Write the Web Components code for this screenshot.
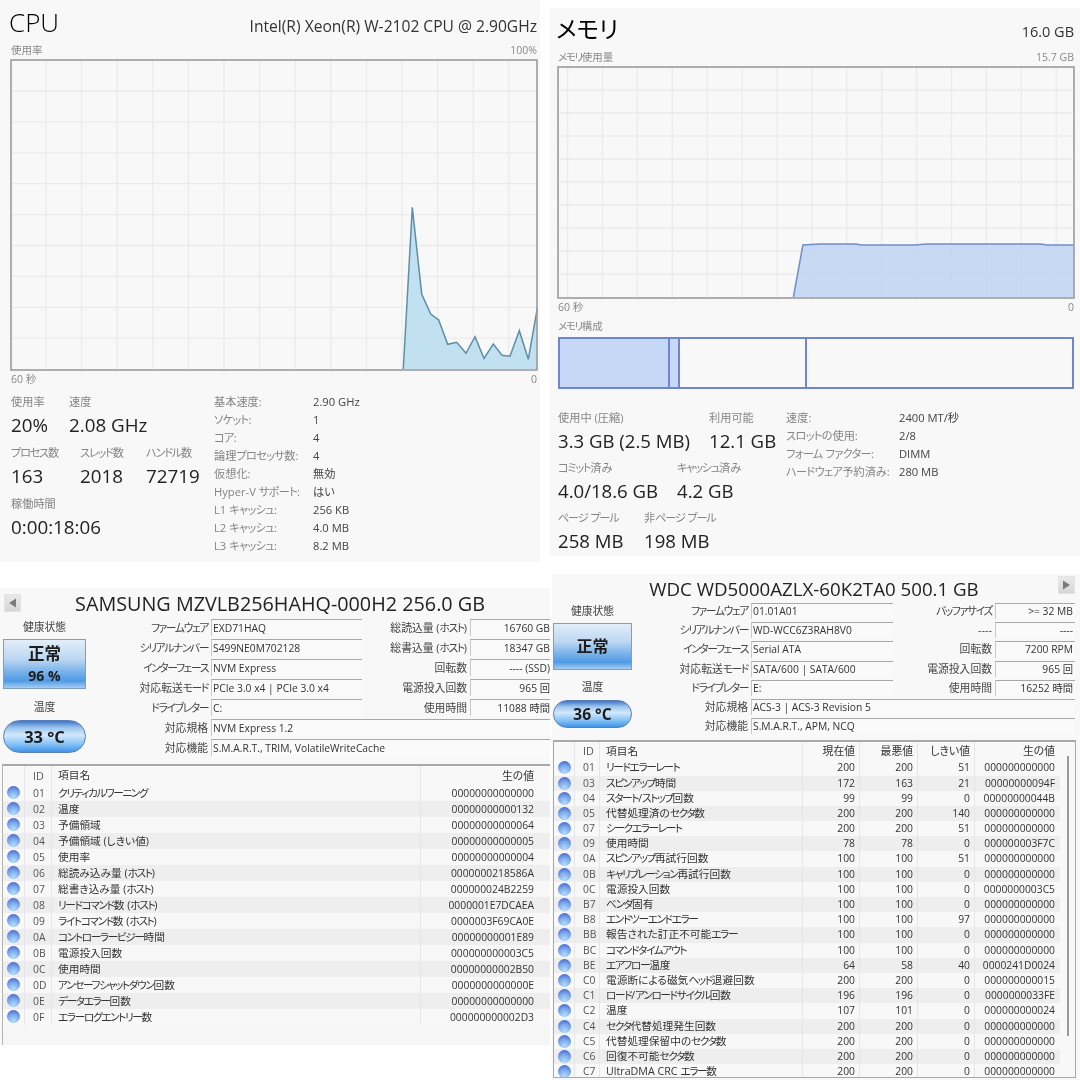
<!DOCTYPE html>
<html lang="ja">
<head>
<meta charset="utf-8">
<title>PC specs</title>
<style>
  html, body { margin: 0; padding: 0; background: #fff; }
  body {
    display: flex;
    width: 1080px;
    height: 1080px;
    overflow: hidden;
    font-family: "Open Sans", "Noto Sans CJK JP", sans-serif;
    font-feature-settings: "palt";
    color: #222;
  }
</style>
</head>
<body>
  <collage-column style="width:550px">
    <perf-panel heading="CPU" detail="Intel(R) Xeon(R) W-2102 CPU @ 2.90GHz" caption="使用率" caption-end="100%" style="width:540px;height:562px;--pad-l:11px;--pad-r:3px;--head-h:44px;--head-size:26px;--title-shift:-2px;--detail-size:15.6px;--detail-pad:8px">
      <usage-graph view="10 59 528 312" col-start="46" col-step="35.6" row-start="91" row-step="30.9" stroke="#5f8ea8" fill="#b9ddef"
        points="403.3,369 412.3,207.3 421.7,294 430.7,314 438.7,320 447.7,344.3 456.7,342.3 466,353.3 475,336.7 484,358.3 493.3,344 502,355.3 510,356.3 519.3,330.7 528.3,359.3 537.3,308.3 537.3,369"></usage-graph>
      <axis-row start="60 秒" end="0"></axis-row>
      <stats-area left="203px" style="margin-top:7px">
        <stat-row columns="58px auto" slot="stats"><stat-item label="使用率" value="20%"></stat-item><stat-item label="速度" value="2.08 GHz"></stat-item></stat-row>
        <stat-row columns="69px 66px auto" slot="stats"><stat-item label="プロセス数" value="163"></stat-item><stat-item label="スレッド数" value="2018"></stat-item><stat-item label="ハンドル数" value="72719"></stat-item></stat-row>
        <stat-row columns="auto" slot="stats"><stat-item label="稼働時間" value="0:00:18:06"></stat-item></stat-row>
        <spec-row label="基本速度:" slot="specs">2.90 GHz</spec-row>
        <spec-row label="ソケット:" slot="specs">1</spec-row>
        <spec-row label="コア:" slot="specs">4</spec-row>
        <spec-row label="論理プロセッサ数:" slot="specs">4</spec-row>
        <spec-row label="仮想化:" slot="specs">無効</spec-row>
        <spec-row label="Hyper-V サポート:" slot="specs">はい</spec-row>
        <spec-row label="L1 キャッシュ:" slot="specs">256 KB</spec-row>
        <spec-row label="L2 キャッシュ:" slot="specs">4.0 MB</spec-row>
        <spec-row label="L3 キャッシュ:" slot="specs">8.2 MB</spec-row>
      </stats-area>
    </perf-panel>

    <disk-panel heading="SAMSUNG MZVLB256HAHQ-000H2 256.0 GB" style="margin-top:26px;width:550px;height:457px;--head-h:30.5px;--title-size:19.8px;--title-pad:3px 0 2px 10px;--fh:17px;--fg:3px;--lw-l:118px;--lw-r:105px;--col-l:272px;--col-r:188px;--status-w:90px;--table-mt:8px;--val-pr:0px">
      <arrow-button slot="prev" dir="left"></arrow-button>
      <disk-status slot="status" status="正常" life="96 %" temp="33 °C" style="--box-w:83px;--box-h:50px;--pill-h:33px;--temp-gap:10px;--pad-l:3px;--status-size:16.5px;--temp-size:16.5px"></disk-status>
      <disk-field label="ファームウェア">EXD71HAQ</disk-field>
      <disk-field label="総読込量 (ホスト)" r>16760 GB</disk-field>
      <disk-field label="シリアルナンバー">S499NE0M702128</disk-field>
      <disk-field label="総書込量 (ホスト)" r>18347 GB</disk-field>
      <disk-field label="インターフェース">NVM Express</disk-field>
      <disk-field label="回転数" r>---- (SSD)</disk-field>
      <disk-field label="対応転送モード">PCIe 3.0 x4 | PCIe 3.0 x4</disk-field>
      <disk-field label="電源投入回数" r>965 回</disk-field>
      <disk-field label="ドライブレター">C:</disk-field>
      <disk-field label="使用時間" r>11088 時間</disk-field>
      <disk-field label="対応規格" wide>NVM Express 1.2</disk-field>
      <disk-field label="対応機能" wide>S.M.A.R.T., TRIM, VolatileWriteCache</disk-field>
      <smart-table slot="table" cols="21px 27px 369px 118px" heads="ID|項目名|生の値" style="margin-left:2px;height:282px;--head-row:19px;--row-h:16px"
        rows="01|クリティカルワーニング|00000000000000
02|温度|00000000000132
03|予備領域|00000000000064
04|予備領域 (しきい値)|00000000000005
05|使用率|00000000000004
06|総読み込み量 (ホスト)|0000000218586A
07|総書き込み量 (ホスト)|000000024B2259
08|リードコマンド数 (ホスト)|0000001E7DCAEA
09|ライトコマンド数 (ホスト)|0000003F69CA0E
0A|コントローラービジー時間|00000000001E89
0B|電源投入回数|000000000003C5
0C|使用時間|00000000002B50
0D|アンセーフシャットダウン回数|0000000000000E
0E|データエラー回数|00000000000000
0F|エラーログエントリー数|000000000002D3"></smart-table>
    </disk-panel>
  </collage-column>

  <collage-column style="width:530px">
    <perf-panel heading="メモリ" detail="16.0 GB" caption="メモリ使用量" caption-end="15.7 GB" style="margin-top:8px;width:530px;height:548px;--pad-l:8px;--pad-r:6px;--head-h:43px;--head-size:23.5px;--head-weight:400;--title-shift:-2px;--detail-size:14.5px;--detail-pad:3px">
      <usage-graph view="557 66 518 233" col-start="567.6" col-step="34.9" row-start="90" row-step="23" stroke="#6f8fca" fill="#bfd3f2"
        points="793.4,297 802.9,244.9 820.4,243.9 856,243.9 861,244.9 915,244.9 927,243.9 1040,243.9 1047,244.9 1073.7,244.9 1073.7,297"></usage-graph>
      <axis-row start="60 秒" end="0" style="margin-top:0"></axis-row>
      <memory-map style="margin-top:3px"></memory-map>
      <stats-area left="228px" style="margin-top:21px;--row-gap:4px;--value-size:18.6px">
        <stat-row columns="151px auto" slot="stats"><stat-item label="使用中 (圧縮)" value="3.3 GB (2.5 MB)"></stat-item><stat-item label="利用可能" value="12.1 GB"></stat-item></stat-row>
        <stat-row columns="119px auto" slot="stats"><stat-item label="コミット済み" value="4.0/18.6 GB"></stat-item><stat-item label="キャッシュ済み" value="4.2 GB"></stat-item></stat-row>
        <stat-row columns="86px auto" slot="stats"><stat-item label="ページ プール" value="258 MB"></stat-item><stat-item label="非ページ プール" value="198 MB"></stat-item></stat-row>
        <spec-row label="速度:" slot="specs" style="--spec-l:113px">2400 MT/秒</spec-row>
        <spec-row label="スロットの使用:" slot="specs" style="--spec-l:113px">2/8</spec-row>
        <spec-row label="フォーム ファクター:" slot="specs" style="--spec-l:113px">DIMM</spec-row>
        <spec-row label="ハードウェア予約済み:" slot="specs" style="--spec-l:113px">280 MB</spec-row>
      </stats-area>
    </perf-panel>

    <disk-panel heading="WDC WD5000AZLX-60K2TA0 500.1 GB" style="margin-top:18px;margin-left:2px;width:528px;height:506px;--head-h:29px;--title-size:18.7px;--title-pad:0 4px 0 0;--fh:16.2px;--fg:3px;--lw-l:110px;--lw-r:99px;--col-l:255px;--col-r:182px;--status-w:86px;--table-mt:6px;--val-pr:2px">
      <span slot="prev"></span>
      <arrow-button slot="next" dir="right"></arrow-button>
      <disk-status slot="status" status="正常" temp="36 °C" style="--box-w:79px;--box-h:47px;--pill-h:28px;--temp-gap:9px;--pad-l:1px;--status-size:16px;--temp-size:15.5px"></disk-status>
      <disk-field label="ファームウェア">01.01A01</disk-field>
      <disk-field label="バッファサイズ" r>&gt;= 32 MB</disk-field>
      <disk-field label="シリアルナンバー">WD-WCC6Z3RAH8V0</disk-field>
      <disk-field label="----" r>----</disk-field>
      <disk-field label="インターフェース">Serial ATA</disk-field>
      <disk-field label="回転数" r>7200 RPM</disk-field>
      <disk-field label="対応転送モード">SATA/600 | SATA/600</disk-field>
      <disk-field label="電源投入回数" r>965 回</disk-field>
      <disk-field label="ドライブレター">E:</disk-field>
      <disk-field label="使用時間" r>16252 時間</disk-field>
      <disk-field label="対応規格" wide>ACS-3 | ACS-3 Revision 5</disk-field>
      <disk-field label="対応機能" wide>S.M.A.R.T., APM, NCQ</disk-field>
      <smart-table slot="table" scrollbar cols="20px 25px 203px 57px 58px 57px 85px" heads="ID|項目名|現在値|最悪値|しきい値|生の値" style="margin-left:1px;width:523px;height:338px;--head-row:18px;--row-h:15.2px"
        rows="01|リードエラーレート|200|200|51|000000000000
03|スピンアップ時間|172|163|21|00000000094F
04|スタート/ストップ回数|99|99|0|00000000044B
05|代替処理済のセクタ数|200|200|140|000000000000
07|シークエラーレート|200|200|51|000000000000
09|使用時間|78|78|0|000000003F7C
0A|スピンアップ再試行回数|100|100|51|000000000000
0B|キャリブレーション再試行回数|100|100|0|000000000000
0C|電源投入回数|100|100|0|0000000003C5
B7|ベンダ固有|100|100|0|000000000000
B8|エンドツーエンドエラー|100|100|97|000000000000
BB|報告された訂正不可能エラー|100|100|0|000000000000
BC|コマンドタイムアウト|100|100|0|000000000000
BE|エアフロー温度|64|58|40|0000241D0024
C0|電源断による磁気ヘッド退避回数|200|200|0|000000000015
C1|ロード/アンロードサイクル回数|196|196|0|0000000033FE
C2|温度|107|101|0|000000000024
C4|セクタ代替処理発生回数|200|200|0|000000000000
C5|代替処理保留中のセクタ数|200|200|0|000000000000
C6|回復不可能セクタ数|200|200|0|000000000000
C7|UltraDMA CRC エラー数|200|200|0|000000000000"></smart-table>
    </disk-panel>
  </collage-column>

<script>
function makeTemplate(html) {
  const t = document.createElement('template');
  t.innerHTML = html;
  return t;
}

// the original UI font has narrow katakana, so tighten just those runs
const KANA_CSS = `.k { letter-spacing: var(--kana, -0.13em); }`;
function tightKana(text) {
  return text.replace(/[ァ-ヶー・]+/g, (m) => `<span class="k">${m}</span>`);
}

// shared base: clones the template into an open shadow root, then calls render()
class ShadowEl extends HTMLElement {
  connectedCallback() {
    if (this.shadowRoot) return;
    const shadow = this.attachShadow({ mode: 'open' });
    shadow.appendChild(this.constructor.template.content.cloneNode(true));
    if (this.render) this.render(shadow);
  }
  attr(name, fallback = '') {
    return this.getAttribute(name) ?? fallback;
  }
}

class CollageColumn extends ShadowEl {
  static template = makeTemplate(`
    <style>:host { display: block; flex: none; }</style>
    <slot></slot>
  `);
}

class PerfPanel extends ShadowEl {
  static template = makeTemplate(`
    <style>
      :host {
        display: block;
        box-sizing: border-box;
        background: #f8f8f8;
        padding: 0 var(--pad-r, 3px) 0 var(--pad-l, 11px);
        filter: blur(0.3px);
      }
      .head {
        display: flex;
        justify-content: space-between;
        align-items: center;
        height: var(--head-h, 44px);
      }
      h1 {
        margin: 0 0 0 var(--title-shift, 0);
        font-weight: var(--head-weight, 300);
        font-size: var(--head-size, 27px);
        line-height: 1;
        color: #000;
      }
      .detail {
        font-size: var(--detail-size, 15px);
        color: #333;
        padding-top: var(--detail-pad, 0);
      }
      .caption {
        display: flex;
        justify-content: space-between;
        height: 15px;
        line-height: 13px;
        font-size: 10.5px;
        color: #888;
      }
      ${KANA_CSS}
    </style>
    <div class="head"><h1></h1><span class="detail"></span></div>
    <div class="caption"><span class="a"></span><span class="b"></span></div>
    <slot></slot>
  `);
  render(s) {
    s.querySelector('h1').textContent = this.attr('heading');
    s.querySelector('.detail').textContent = this.attr('detail');
    s.querySelector('.a').innerHTML = tightKana(this.attr('caption'));
    s.querySelector('.b').textContent = this.attr('caption-end');
  }
}

class UsageGraph extends ShadowEl {
  static template = makeTemplate(`
    <style>
      :host { display: block; margin-left: -1px; line-height: 0; }
      svg { display: block; }
    </style>
    <svg xmlns="http://www.w3.org/2000/svg"></svg>
  `);
  render(s) {
    const [vx, vy, vw, vh] = this.attr('view').split(' ').map(Number);
    const svg = s.querySelector('svg');
    svg.setAttribute('viewBox', `${vx} ${vy} ${vw} ${vh}`);
    svg.setAttribute('width', vw);
    svg.setAttribute('height', vh);
    const stroke = this.attr('stroke');
    const fill = this.attr('fill');
    let out = '';
    const colStep = Number(this.attr('col-step'));
    const rowStep = Number(this.attr('row-step'));
    for (let x = Number(this.attr('col-start')); x < vx + vw - 2; x += colStep) {
      out += `<line x1="${x}" x2="${x}" y1="${vy}" y2="${vy + vh}" stroke="#ebebeb" stroke-width="1.3"/>`;
    }
    for (let y = Number(this.attr('row-start')); y < vy + vh - 2; y += rowStep) {
      out += `<line x1="${vx}" x2="${vx + vw}" y1="${y}" y2="${y}" stroke="#ebebeb" stroke-width="1.3"/>`;
    }
    const pts = this.attr('points');
    const line = pts.split(' ').slice(0, -1).join(' ');
    out += `<polygon points="${pts}" fill="${fill}" fill-opacity="0.85"/>`;
    out += `<polyline points="${line}" fill="none" stroke="${stroke}" stroke-width="1.5"/>`;
    out += `<rect x="${vx + 1}" y="${vy + 1}" width="${vw - 2}" height="${vh - 2}" fill="none" stroke="#9c9c9c" stroke-width="1.6"/>`;
    svg.innerHTML = out;
  }
}

class AxisRow extends ShadowEl {
  static template = makeTemplate(`
    <style>
      :host {
        display: flex;
        justify-content: space-between;
        height: 16px;
        line-height: 16px;
        font-size: 10.5px;
        color: #888;
      }
    </style>
    <span class="a"></span><span class="b"></span>
  `);
  render(s) {
    s.querySelector('.a').textContent = this.attr('start');
    s.querySelector('.b').textContent = this.attr('end');
  }
}

class MemoryMap extends ShadowEl {
  static template = makeTemplate(`
    <style>
      :host { display: block; }
      .label { height: 16px; line-height: 16px; font-size: 10.5px; color: #888; }
      .bar {
        display: flex;
        box-sizing: border-box;
        margin-top: 3px;
        height: 52px;
        border: 2px solid #6f86cf;
      }
      .seg { box-sizing: border-box; border-right: 2px solid #6f86cf; }
      .seg:last-child { border-right: 0; flex: 1; }
      .used { background: #c6d8f5; }
      ${KANA_CSS}
    </style>
    <div class="label"><span class="k">メモリ</span>構成</div>
    <div class="bar">
      <div class="seg used" style="width:110px"></div>
      <div class="seg used" style="width:10px"></div>
      <div class="seg" style="width:127px"></div>
      <div class="seg"></div>
    </div>
  `);
}

class StatsArea extends ShadowEl {
  static template = makeTemplate(`
    <style>
      :host { display: flex; }
      .stats { display: flex; flex-direction: column; gap: var(--row-gap, 5px); flex: none; }
      .specs { display: flex; flex-direction: column; margin-top: -1px; }
    </style>
    <div class="stats"><slot name="stats"></slot></div>
    <div class="specs"><slot name="specs"></slot></div>
  `);
  render(s) {
    s.querySelector('.stats').style.width = this.attr('left');
  }
}

class StatRow extends ShadowEl {
  static template = makeTemplate(`
    <style>:host { display: grid; }</style>
    <slot></slot>
  `);
  render() {
    this.style.gridTemplateColumns = this.attr('columns');
  }
}

class StatItem extends ShadowEl {
  static template = makeTemplate(`
    <style>
      :host { display: block; white-space: nowrap; }
      .label { height: 16px; line-height: 16px; font-size: 11.2px; color: #858585; --kana: -0.11em; }
      .value { height: 30px; line-height: 30px; font-size: var(--value-size, 18.8px); color: #222; }
      ${KANA_CSS}
    </style>
    <div class="label"></div>
    <div class="value"></div>
  `);
  render(s) {
    s.querySelector('.label').innerHTML = tightKana(this.attr('label'));
    s.querySelector('.value').textContent = this.attr('value');
  }
}

class SpecRow extends ShadowEl {
  static template = makeTemplate(`
    <style>
      :host {
        display: grid;
        grid-template-columns: var(--spec-l, 99px) auto;
        height: 18px;
        line-height: 18px;
        font-size: 11.2px;
        color: #444;
        white-space: nowrap;
        --kana: -0.06em;
      }
      .label { color: #858585; }
      ${KANA_CSS}
    </style>
    <span class="label"></span><span><slot></slot></span>
  `);
  render(s) {
    s.querySelector('.label').innerHTML = tightKana(this.attr('label'));
  }
}

class ArrowButton extends ShadowEl {
  static template = makeTemplate(`
    <style>
      :host {
        display: flex;
        align-items: center;
        justify-content: center;
        width: 17px;
        height: 18px;
        background: linear-gradient(#e9e9e9, #d6d6d6);
        border: 1px solid #e4e4e4;
        box-sizing: border-box;
      }
    </style>
    <svg width="9" height="10" viewBox="0 0 9 10"><polygon fill="#7a7a7a"></polygon></svg>
  `);
  render(s) {
    const left = this.attr('dir') === 'left';
    s.querySelector('polygon').setAttribute('points', left ? '8,0.5 8,9.5 1,5' : '1,0.5 1,9.5 8,5');
  }
}

class DiskPanel extends ShadowEl {
  static template = makeTemplate(`
    <style>
      :host { display: block; box-sizing: border-box; background: #f8f8f8; overflow: hidden; filter: blur(0.3px); }
      .head {
        display: grid;
        grid-template-columns: 30px 1fr 30px;
        align-items: center;
        height: var(--head-h, 30px);
      }
      .head ::slotted([slot="prev"]) { margin-left: 4px; }
      .head ::slotted([slot="next"]) { margin-left: 8px; margin-top: -8px; }
      h1 {
        margin: 0;
        box-sizing: border-box;
        padding: var(--title-pad, 0);
        line-height: 24px;
        text-align: center;
        font-weight: 400;
        font-size: var(--title-size, 18px);
        color: #222;
        white-space: nowrap;
      }
      .body { display: flex; }
      .status { flex: none; width: var(--status-w, 90px); }
      .fields {
        display: grid;
        grid-template-columns: var(--col-l) var(--col-r);
        grid-auto-rows: var(--fh, 17px);
        row-gap: var(--fg, 3px);
        align-content: start;
      }
      .table { margin-top: var(--table-mt, 8px); }
    </style>
    <div class="head"><div><slot name="prev"></slot></div><h1></h1><div><slot name="next"></slot></div></div>
    <div class="body">
      <div class="status"><slot name="status"></slot></div>
      <div class="fields"><slot></slot></div>
    </div>
    <div class="table"><slot name="table"></slot></div>
  `);
  render(s) {
    s.querySelector('h1').textContent = this.attr('heading');
  }
}

class DiskField extends ShadowEl {
  static template = makeTemplate(`
    <style>
      :host {
        display: grid;
        grid-template-columns: var(--lw, var(--lw-l)) 1fr;
        column-gap: 3px;
        font-size: 10.3px;
        white-space: nowrap;
        min-width: 0;
      }
      :host([r]) { --lw: var(--lw-r); }
      :host([wide]) { grid-column: 1 / 3; }
      .label {
        text-align: right;
        font-size: 10.8px;
        color: #444;
        line-height: var(--fh);
      }
      .value {
        box-sizing: border-box;
        overflow: hidden;
        border-top: 1px solid #a8a8a8;
        border-left: 1px solid #c8c8c8;
        background: #fafafa;
        padding: 0 0 0 1px;
        line-height: calc(var(--fh) - 1px);
        color: #333;
      }
      :host([r]) .value { text-align: right; padding-right: var(--val-pr, 0); }
      ${KANA_CSS}
    </style>
    <span class="label"></span><span class="value"><slot></slot></span>
  `);
  render(s) {
    s.querySelector('.label').innerHTML = tightKana(this.attr('label'));
  }
}

class DiskStatus extends ShadowEl {
  static template = makeTemplate(`
    <style>
      :host { display: block; padding-left: var(--pad-l, 3px); }
      .title {
        width: var(--box-w);
        height: 16px;
        line-height: 16px;
        text-align: center;
        font-size: 10.8px;
        color: #444;
      }
      .health {
        box-sizing: border-box;
        display: flex;
        flex-direction: column;
        align-items: center;
        justify-content: center;
        width: var(--box-w);
        height: var(--box-h);
        margin-top: 4px;
        border: 1px solid #7f9cc4;
        background: linear-gradient(#e2edf8 0%, #bcd7f2 40%, #7cb3ea 65%, #4f9ae6 85%, #a6cdf0 100%);
        color: #1c1c1c;
        font-weight: 700;
      }
      .status { font-size: var(--status-size, 16px); line-height: 23px; }
      .life { font-size: 14px; line-height: 21px; }
      .pill {
        box-sizing: border-box;
        display: flex;
        align-items: center;
        justify-content: center;
        width: var(--box-w);
        height: var(--pill-h);
        margin-top: 5px;
        border: 1px solid #5a7fb8;
        border-radius: 999px;
        background: linear-gradient(#3f74c8 0%, #9cc5ee 22%, #d3e8fb 45%, #8cc6f6 72%, #3f95ea 100%);
        font-size: var(--temp-size, 16px);
        font-weight: 700;
        color: #1c1c1c;
      }
      .gap { margin-top: var(--temp-gap, 10px); }
    </style>
    <div class="title">健康状態</div>
    <div class="health"><span class="status"></span><span class="life"></span></div>
    <div class="title gap">温度</div>
    <div class="pill"></div>
  `);
  render(s) {
    s.querySelector('.status').textContent = this.attr('status');
    const life = s.querySelector('.life');
    if (this.hasAttribute('life')) life.textContent = this.attr('life');
    else life.remove();
    s.querySelector('.pill').textContent = this.attr('temp');
  }
}

class SmartTable extends ShadowEl {
  static template = makeTemplate(`
    <style>
      :host {
        display: block;
        position: relative;
        box-sizing: border-box;
        width: 548px;
        border-top: 2px solid #a8a8a8;
        border-left: 1px solid #b4b4b4;
        background: #f6f6f6;
        font-size: 10.3px;
        color: #333;
        white-space: nowrap;
        overflow: hidden;
      }
      :host([scrollbar]) { border: 1px solid #a8a8a8; border-top-width: 2px; }
      .row { display: grid; height: var(--row-h); line-height: var(--row-h); background: #f8f8f8; }
      .row:nth-child(odd):not(.hd) { background: #eeeeee; }
      .hd { height: var(--head-row); line-height: var(--head-row); font-size: 10.8px; }
      .c { padding: 0 4px; overflow: hidden; border-left: 1px solid #e6e6e6; }
      .c:first-child { border-left: 0; padding: 0; display: flex; align-items: center; justify-content: center; }
      .id { padding-left: 8px; color: #555; }
      .name { padding-left: 6px; font-size: 10.7px; }
      .num { text-align: right; }
      i {
        display: block;
        flex: none;
        width: 13px;
        height: 13px;
        border-radius: 50%;
        background: radial-gradient(circle at 50% 85%, #b5dcfb 0, #7aa8ec 50%, #4564cc 90%);
      }
      /* scrollbar track, lies over the end of the table */
      .track { position: absolute; top: 0; right: 0; bottom: 0; width: 15px; background: #f8f8f8; }
      .thumb { position: absolute; top: 14px; left: 7px; width: 1.5px; height: 280px; background: #9a9a9a; }
      ${KANA_CSS}
    </style>
    <div class="rows"></div>
  `);
  render(s) {
    const cols = this.attr('cols');
    const heads = this.attr('heads').split('|');
    const rows = this.attr('rows').trim().split('\n').map((r) => r.split('|'));
    const cell = (v, i) => {
      const cls = i === 0 ? 'id' : i === 1 ? 'name' : 'num';
      return `<div class="c ${cls}">${i === 1 ? tightKana(v) : v}</div>`;
    };
    let html = `<div class="row hd" style="grid-template-columns:${cols}"><div class="c"></div>${heads.map(cell).join('')}</div>`;
    html += rows
      .map((r) => `<div class="row" style="grid-template-columns:${cols}"><div class="c"><i></i></div>${r.map(cell).join('')}</div>`)
      .join('');
    s.querySelector('.rows').innerHTML = html;
    if (this.hasAttribute('scrollbar')) {
      const track = document.createElement('div');
      track.className = 'track';
      track.innerHTML = '<div class="thumb"></div>';
      s.appendChild(track);
    }
  }
}

customElements.define('collage-column', CollageColumn);
customElements.define('perf-panel', PerfPanel);
customElements.define('usage-graph', UsageGraph);
customElements.define('axis-row', AxisRow);
customElements.define('memory-map', MemoryMap);
customElements.define('stats-area', StatsArea);
customElements.define('stat-row', StatRow);
customElements.define('stat-item', StatItem);
customElements.define('spec-row', SpecRow);
customElements.define('arrow-button', ArrowButton);
customElements.define('disk-panel', DiskPanel);
customElements.define('disk-field', DiskField);
customElements.define('disk-status', DiskStatus);
customElements.define('smart-table', SmartTable);
</script>
</body>
</html>
